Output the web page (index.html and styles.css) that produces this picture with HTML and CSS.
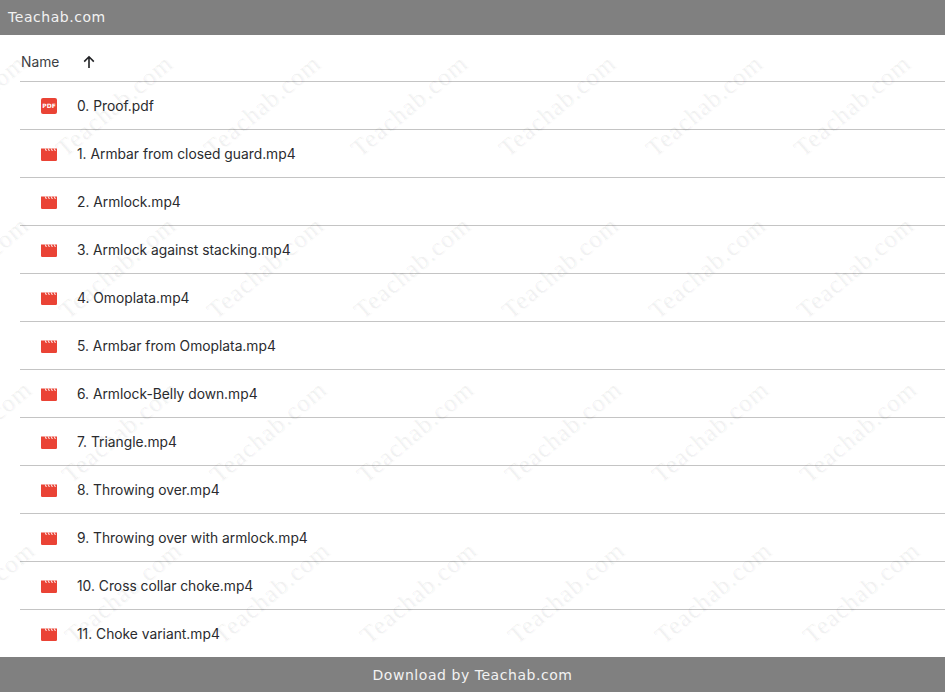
FILE: index.html
```html
<!DOCTYPE html>
<html>
<head>
  <title>Teachab.com</title>
  <link rel="stylesheet" href="styles.css">
</head>
<body>
  <svg class="icon-defs" width="0" height="0">
    <symbol id="icon-video" viewBox="0 0 16 16">
      <path d="M0 2.500H16V13.800A1.200 1.200 0 0 1 14.800 15H1.200A1.200 1.200 0 0 1 0 13.800z"/>
      <path class="ticks" d="M4.300 2.500l1 2.500M7.300 2.500l1 2.500M10.300 2.500l1 2.500M13.300 2.500l1 2.500"/>
    </symbol>
  </svg>

  <div class="top-bar">Teachab.com</div>

  <div class="file-list">
    <div class="list-head">
      <span class="name-label">Name</span>
      <svg class="sort-arrow" viewBox="0 0 16 16"><path d="M8 14V3M3.200 7.600 8 2.800l4.800 4.800"/></svg>
    </div>

    <div class="file-row">
      <svg class="file-icon" viewBox="0 0 16 16"><rect x="0" y="0" width="16" height="16" rx="2"/><text x="8" y="10.300" class="pdf-text">PDF</text></svg>
      <span>0. Proof.pdf</span>
    </div>
    <div class="file-row"><svg class="file-icon"><use href="#icon-video"/></svg><span>1. Armbar from closed guard.mp4</span></div>
    <div class="file-row"><svg class="file-icon"><use href="#icon-video"/></svg><span>2. Armlock.mp4</span></div>
    <div class="file-row"><svg class="file-icon"><use href="#icon-video"/></svg><span>3. Armlock against stacking.mp4</span></div>
    <div class="file-row"><svg class="file-icon"><use href="#icon-video"/></svg><span>4. Omoplata.mp4</span></div>
    <div class="file-row"><svg class="file-icon"><use href="#icon-video"/></svg><span>5. Armbar from Omoplata.mp4</span></div>
    <div class="file-row"><svg class="file-icon"><use href="#icon-video"/></svg><span>6. Armlock-Belly down.mp4</span></div>
    <div class="file-row"><svg class="file-icon"><use href="#icon-video"/></svg><span>7. Triangle.mp4</span></div>
    <div class="file-row"><svg class="file-icon"><use href="#icon-video"/></svg><span>8. Throwing over.mp4</span></div>
    <div class="file-row"><svg class="file-icon"><use href="#icon-video"/></svg><span>9. Throwing over with armlock.mp4</span></div>
    <div class="file-row"><svg class="file-icon"><use href="#icon-video"/></svg><span>10. Cross collar choke.mp4</span></div>
    <div class="file-row last"><svg class="file-icon"><use href="#icon-video"/></svg><span>11. Choke variant.mp4</span></div>
  </div>

  <div class="bottom-bar">Download by Teachab.com</div>

  <div class="watermarks" id="watermarks"></div>
  <script src="script.js"></script>
</body>
</html>
```

FILE: styles.css
```css
body {
  font-family: Inter, Arial, sans-serif;
  margin: 0;
  height: 692px;
  overflow: hidden;
  display: flex;
  flex-direction: column;
  position: relative;
  background-color: #fff;
}
.icon-defs {
  position: absolute;
}
.top-bar {
  height: 35px;
  line-height: 35px;
  padding-left: 8px;
  background-color: #808080;
  color: #f2f2f2;
  font-family: "DejaVu Sans", Verdana, sans-serif;
  font-size: 14px;
  letter-spacing: 0.55px;
  flex: none;
}
.file-list {
  flex: 1;
  margin-left: 20px;
}
.list-head {
  height: 38px;
  padding-top: 8px;
  display: flex;
  align-items: center;
  border-bottom: 1px solid #c4c4c4;
  font-size: 13.8px;
  color: #3c4043;
}
.name-label {
  width: 61px;
  padding-left: 1px;
  box-sizing: border-box;
}
.sort-arrow {
  width: 16px;
  height: 16px;
  fill: none;
  stroke: #202124;
  stroke-width: 1.6;
}
.file-row {
  height: 47px;
  display: flex;
  align-items: center;
  border-bottom: 1px solid #c4c4c4;
  font-size: 13.8px;
  color: #2a2b2e;
}
.file-row.last {
  border-bottom: none;
}
.file-icon {
  width: 16px;
  height: 16px;
  margin-left: 21px;
  margin-right: 20px;
  fill: #ea4335;
  flex: none;
}
.ticks {
  fill: none;
  stroke: #fff;
  stroke-width: 1;
}
.pdf-text {
  fill: #fff;
  font-family: "DejaVu Sans", sans-serif;
  font-size: 6px;
  font-weight: bold;
  text-anchor: middle;
}
.bottom-bar {
  height: 35px;
  line-height: 36px;
  background-color: #808080;
  color: #f2f2f2;
  font-family: "DejaVu Sans", Verdana, sans-serif;
  font-size: 14px;
  letter-spacing: 0.55px;
  text-align: center;
  flex: none;
}
.watermarks {
  position: absolute;
  inset: 0;
  pointer-events: none;
}
.watermark {
  position: absolute;
  font-family: "Liberation Serif", serif;
  font-size: 25px;
  letter-spacing: 1px;
  color: rgba(0, 0, 0, 0.045);
  text-shadow: 1px 1px 1px rgba(0, 0, 0, 0.03);
  white-space: nowrap;
  transform: translate(-50%, -50%) rotate(-40deg);
}
```

FILE: script.js
```js
const box = document.getElementById('watermarks');
const ys = [106, 268, 432, 593];
ys.forEach(function(y, row) {
  for (let i = -1; i < 6; i++) {
    const mark = document.createElement('span');
    mark.className = 'watermark';
    mark.textContent = 'Teachab.com';
    mark.style.left = (114 + row * 3 + i * 147.5) + 'px';
    mark.style.top = y + 'px';
    box.appendChild(mark);
  }
});
```
